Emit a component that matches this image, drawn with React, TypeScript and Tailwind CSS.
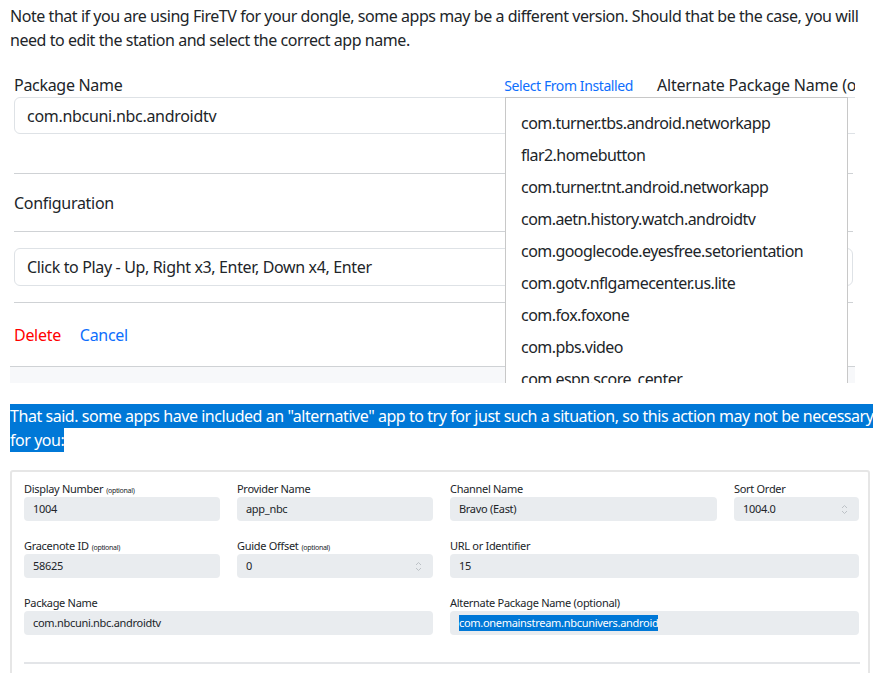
const apps = [
  "com.turner.tbs.android.networkapp",
  "flar2.homebutton",
  "com.turner.tnt.android.networkapp",
  "com.aetn.history.watch.androidtv",
  "com.googlecode.eyesfree.setorientation",
  "com.gotv.nflgamecenter.us.lite",
  "com.fox.foxone",
  "com.pbs.video",
  "com.espn.score_center",
];

const Spinner = () => (
  <svg width="7" height="11" viewBox="0 0 7 11" className="shrink-0">
    <path d="M1 4 L3.5 1.5 L6 4" fill="none" stroke="#b8bdc2" strokeWidth="0.9" />
    <path d="M1 7 L3.5 9.5 L6 7" fill="none" stroke="#b8bdc2" strokeWidth="0.9" />
  </svg>
);

type FieldProps = {
  label: string;
  optional?: boolean;
  value: string;
  width: string;
  spinner?: boolean;
  selected?: boolean;
};

const Field = ({ label, optional, value, width, spinner, selected }: FieldProps) => (
  <div className={`${width} flex flex-col gap-[1px]`}>
    <div className="h-[14px] leading-[14px] text-[11px] text-[#212529] whitespace-nowrap">
      {label}
      {optional && <span className="text-[7px] ml-[3px]">(optional)</span>}
    </div>
    <div className="h-[24px] rounded-[4px] bg-[#e9ecef] flex items-center pl-[9px] pr-[11px] text-[11px] text-[#212529]">
      <span className={selected ? "bg-[#0078d7] text-white" : ""}>{value}</span>
      {spinner && <div className="ml-auto"><Spinner /></div>}
    </div>
  </div>
);

const App = () => {
  return (
    <div className="w-[875px] h-[673px] overflow-hidden bg-white text-[#212529]" style={{ fontFamily: '"Noto Sans", "Open Sans", sans-serif' }}>
      <p className="px-[10px] pt-[4px] text-[16px] leading-[24px] whitespace-nowrap tracking-[-0.45px]">
        Note that if you are using FireTV for your dongle, some apps may be a different version. Should that be the case, you will
        <br />
        need to edit the station and select the correct app name.
      </p>

      {/* top screenshot */}
      <div className="relative ml-[10px] mt-[13px] w-[845px] h-[318px] overflow-hidden">
        <div className="flex gap-[24px] pl-[4px] pt-[10px]">
          <div className="w-[619px] shrink-0">
            <div className="flex justify-between items-center h-[20px]">
              <span className="text-[16px] tracking-[-0.3px]">Package Name</span>
              <span className="text-[14px] text-[#0d6efd] tracking-[-0.4px]">Select From Installed</span>
            </div>
            <div className="mt-[2px] h-[37px] border border-[#dee2e6] rounded-[6px] flex items-center pl-[12px] text-[16px] tracking-[-0.3px]">
              com.nbcuni.nbc.androidtv
            </div>
          </div>
          <div className="flex-1 min-w-0">
            <div className="h-[20px] flex items-center text-[16px] whitespace-nowrap tracking-[-0.2px]">Alternate Package Name (optional)</div>
            <div className="mt-[2px] h-[37px] border border-[#dee2e6] rounded-[6px] w-[220px]" />
          </div>
        </div>
        <div className="ml-[4px] mt-[39px] border-t border-[#cfd2d5] w-[839px]" />
        <div className="pl-[4px] h-[57px] flex items-center text-[16px] tracking-[-0.3px]">Configuration</div>
        <div className="ml-[4px] border-t border-[#cfd2d5] w-[839px]" />
        <div className="ml-[4px] mt-[16px] h-[38px] w-[839px] border border-[#dee2e6] rounded-[6px] flex items-center pl-[12px] text-[16px] tracking-[-0.35px]">
          Click to Play - Up, Right x3, Enter, Down x4, Enter
        </div>
        <div className="ml-[4px] mt-[16px] border-t border-[#cfd2d5] w-[839px]" />
        <div className="pl-[4px] h-[63px] flex items-center gap-[19px] text-[16px] tracking-[-0.3px]">
          <span className="text-[#ff0000]">Delete</span>
          <span className="text-[#0d6efd]">Cancel</span>
        </div>
        <div className="border-t border-[#cfd2d5] w-[845px] h-[17px] bg-[#f7f8fa]" />

        {/* dropdown of installed apps */}
        <div className="absolute left-[495px] top-[32px] w-[343px] h-[300px] bg-white border border-[#c8c8c8] pt-[9px]">
          {apps.map((a) => (
            <div key={a} className="h-[32px] flex items-center pl-[15px] text-[16px] tracking-[-0.55px] whitespace-nowrap">
              {a}
            </div>
          ))}
        </div>
      </div>

      <p className="px-[10px] mt-[21px] text-[16px] leading-[24px] whitespace-nowrap tracking-[-0.45px]">
        <span className="bg-[#0078d7] text-white py-[1px]">
          That said. some apps have included an "alternative" app to try for just such a situation, so this action may not be necessary
        </span>
        <br />
        <span className="bg-[#0078d7] text-white py-[1px]">for you:</span>
      </p>

      {/* bottom screenshot */}
      <div className="ml-[10px] mt-[18px] w-[860px] h-[220px] border-2 border-[#e6e6e6] rounded-[3px] pl-[12px] pr-[9px] pt-[10px] tracking-[-0.3px]">
        <div className="flex flex-col gap-[18px]">
          <div className="flex gap-[17px]">
            <Field label="Display Number" optional value="1004" width="w-[196px]" />
            <Field label="Provider Name" value="app_nbc" width="w-[196px]" />
            <Field label="Channel Name" value="Bravo (East)" width="w-[267px]" />
            <Field label="Sort Order" value="1004.0" width="w-[125px]" spinner />
          </div>
          <div className="flex gap-[17px]">
            <Field label="Gracenote ID" optional value="58625" width="w-[196px]" />
            <Field label="Guide Offset" optional value="0" width="w-[196px]" spinner />
            <Field label="URL or Identifier" value="15" width="w-[409px]" />
          </div>
          <div className="flex gap-[17px]">
            <Field label="Package Name" value="com.nbcuni.nbc.androidtv" width="w-[409px]" />
            <Field label="Alternate Package Name (optional)" value="com.onemainstream.nbcunivers.android" width="w-[409px]" selected />
          </div>
        </div>
        <div className="mt-[27px] border-t-2 border-[#e3e5e8] w-[836px]" />
      </div>
    </div>
  );
};

export default App;
